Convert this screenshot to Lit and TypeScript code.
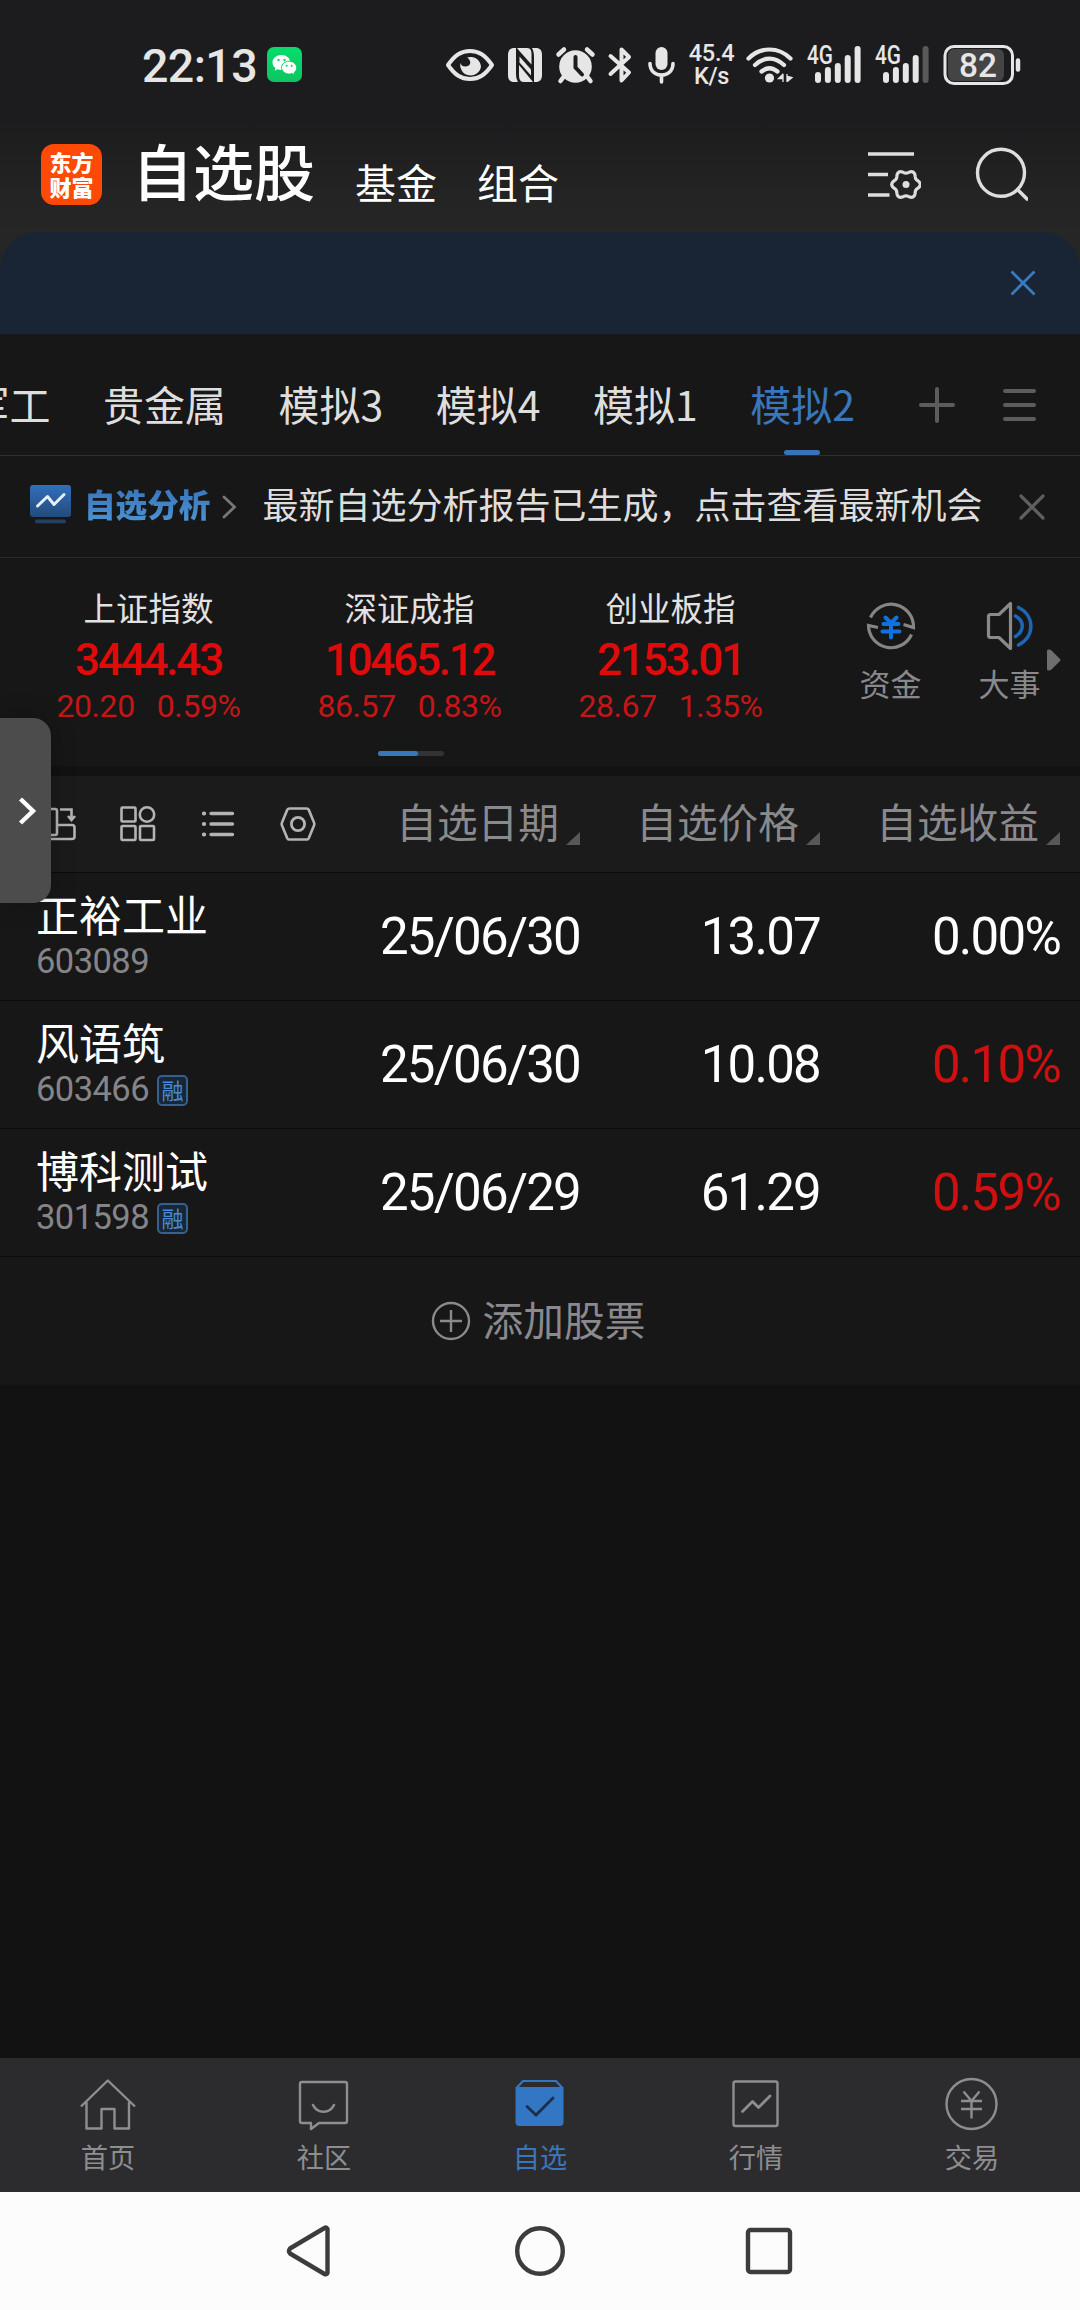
import { LitElement, html, css, svg, nothing } from "lit";
import { customElement, property } from "lit/decorators.js";
import { classMap } from "lit/directives/class-map.js";

const fontStack = css`"Noto Sans CJK SC", "Noto Sans", sans-serif`;
const numberStack = css`Roboto, "Noto Sans CJK SC", sans-serif`;

const pic = (w: number, h: number, body: unknown) =>
  html`<svg width=${w} height=${h} viewBox="0 0 ${w} ${h}" fill="none">${body}</svg>`;

/* ---------- status bar ---------- */

@customElement("status-bar")
class StatusBar extends LitElement {
  static styles = css`
    :host {
      display: grid;
      grid-template-columns: 124px 179px 62px 48px 52px 40px 40px 58px 61px 68px 68px 80px;
      align-items: center;
      height: 129px;
      padding-left: 143px;
      box-sizing: border-box;
      color: #e6e6e6;
      font-family: ${numberStack};
    }
    svg { display: block; overflow: visible; }
    .time { font-size: 46.500px; line-height: 54px; margin: 2px 0 0 -1px; letter-spacing: -0.600px; white-space: nowrap; font-weight: 500; }
    .speed { display: flex; flex-direction: column; font-size: 23.500px; line-height: 22.500px; width: 47px; text-align: center; letter-spacing: -0.300px; font-weight: 500; }
    text { font-family: ${numberStack}; fill: #e6e6e6; }
  `;

  private signal(weak: boolean) {
    const tops = [26, 21, 17, 9, 0];
    return pic(55, 37, svg`
      <text x="0" y="18" font-size="25" font-weight="500" textLength="26" lengthAdjust="spacingAndGlyphs">4G</text>
      ${tops.map((t, i) => svg`<rect x=${8 + i * 9.9} y=${t} width="6" height=${37 - t} rx="3"
        fill=${weak && i === 4 ? "#59595a" : "#e6e6e6"} />`)}`);
  }

  render() {
    const c = "#e6e6e6";
    return html`
      <span class="time">22:13</span>
      ${pic(35, 35, svg`
        <defs><linearGradient id="g" x1="0" y1="0" x2="0" y2="1"><stop offset="0" stop-color="#06dc6b"/><stop offset="1" stop-color="#0cc561"/></linearGradient></defs>
        <rect width="35" height="35" rx="7" fill="url(#g)"/>
        <path d="M14.500 8C9.500 8 5.500 11.200 5.500 15.500c0 2.300 1.200 4.200 3 5.600l-.8 2.700 3-1.500c1.200.4 2.400.6 3.800.6 5 0 8.800-3.400 8.800-7.400S19.500 8 14.500 8z" fill="#fff"/>
        <path d="M22.200 14.200c-4.300 0-7.700 2.900-7.700 6.400s3.400 6.500 7.700 6.500c1 0 2-.2 2.900-.5l2.600 1.400-.7-2.300c1.700-1.200 2.700-3 2.700-5.100 0-3.500-3.300-6.400-7.500-6.400z" fill="#fff" stroke="#09cf66" stroke-width="1"/>
        <g fill="#09cf66"><circle cx="11.500" cy="13" r="1.200"/><circle cx="17.500" cy="13" r="1.200"/><circle cx="19.700" cy="18.800" r="1"/><circle cx="24.700" cy="18.800" r="1"/></g>`)}
      ${pic(48, 34, svg`
        <path d="M2 17C9 7 15 3 24 3s15 4 22 14C39 27 33 31 24 31S9 27 2 17z" stroke=${c} stroke-width="4" stroke-linejoin="round"/>
        <path d="M21 9.500A10.500 10.500 0 0 1 35 18.500a10.500 10.500 0 1 1-20.700-3.500A5.500 5.500 0 0 0 20 18.500C25 18 26 13 21 9.500z" fill=${c}/>`)}
      ${pic(34, 34, svg`
        <path d="M6.500 0 C2 0 0 2.500 0 7v20c0 4.500 2 7 6 7h4C8.500 31 8 29 8 25V0z" fill=${c}/>
        <path d="M9 0h10c4 0 4.500 3 4.500 7v9.500L10.500 2z" fill=${c}/>
        <path d="M11 17v10c0 4 1 7 4.500 7h9.500z" fill=${c}/>
        <path d="M11.500 8.500 23 21.500v6L11.500 14.500z" fill=${c}/>
        <path d="M27.500 34C32 34 34 31.500 34 27V7c0-4.500-2-7-6-7h-4c1.500 3 2 5 2 9v25z" fill=${c}/>`)}
      ${pic(39, 36, svg`
        <circle cx="19.500" cy="19.500" r="16.300" fill=${c}/>
        <path d="M2.500 7.500 8 2.500M36.500 7.500 31 2.500" stroke=${c} stroke-width="4.500" stroke-linecap="round"/>
        <path d="M7.500 30 4.500 34M31.500 30l3 4" stroke=${c} stroke-width="4.500" stroke-linecap="round"/>
        <path d="M19.500 10v10.500L26 27.500" stroke="#1d1d1e" stroke-width="4" stroke-linecap="round"/>`)}
      ${pic(24, 36, svg`
        <path d="M2.500 9 21 25.500 13.500 33.500V2.500L21 10 2.500 27" stroke=${c} stroke-width="4" stroke-linecap="round" stroke-linejoin="round"/>`)}
      ${pic(27, 36, svg`
        <rect x="7.500" y="0" width="12" height="23" rx="6" fill=${c}/>
        <path d="M2 16.500C2 32 25 32 25 16.500M13.500 28v7" stroke=${c} stroke-width="3.600" stroke-linecap="round"/>`)}
      <div class="speed"><span>45.4</span><span>K/s</span></div>
      ${pic(47, 36, svg`
        <path d="M2.500 11.500c12-12 30-12 42 0" stroke=${c} stroke-width="4.200" stroke-linecap="round"/>
        <path d="M9 18c9-8.500 20-8.500 29 0" stroke=${c} stroke-width="4.200" stroke-linecap="round"/>
        <path d="M15.500 24.500c5.500-4.500 10.500-4.500 16 0" stroke=${c} stroke-width="4.200" stroke-linecap="round"/>
        <circle cx="23.500" cy="31" r="4.600" fill=${c}/>
        <path d="M32.500 31.500h4v-4zM37 27v8M41 27v8M41.500 29.500l4.500 1-4 3.500z" stroke=${c} stroke-width="1.300" fill=${c}/>`)}
      ${this.signal(false)}
      ${this.signal(true)}
      ${pic(80, 40, svg`
        <rect x="5" y="4" width="56" height="32" rx="6" fill="#444445"/>
        <rect x="2" y="1.500" width="67.500" height="37" rx="9" stroke=${c} stroke-width="3"/>
        <path d="M75 15.500v9" stroke=${c} stroke-width="4.500" stroke-linecap="round"/>
        <text x="16" y="31.500" font-size="33" font-weight="500" textLength="38" lengthAdjust="spacingAndGlyphs">82</text>`)}
    `;
  }
}

/* ---------- index quote ---------- */

@customElement("index-quote")
class IndexQuote extends LitElement {
  @property() name = "";
  @property() price = "";
  @property() change = "";
  @property() percent = "";

  static styles = css`
    :host {
      display: flex;
      flex-direction: column;
      align-items: center;
      width: 261px;
      font-family: ${numberStack};
      white-space: nowrap;
    }
    .name { font-family: ${fontStack}; font-size: 32.500px; line-height: 40px; color: #e2e2e2; }
    .price { font-size: 44px; line-height: 50px; margin-top: 8px; color: #df0a0a; font-weight: 500; letter-spacing: -2.200px; }
    .delta { display: flex; gap: 22px; font-size: 32px; line-height: 36px; margin-top: 3px; color: #c41616; letter-spacing: -0.400px; }
  `;

  render() {
    return html`
      <div class="name">${this.name}</div>
      <div class="price">${this.price}</div>
      <div class="delta"><span>${this.change}</span><span>${this.percent}</span></div>
    `;
  }
}

/* ---------- watchlist row ---------- */

@customElement("stock-row")
class StockRow extends LitElement {
  @property() name = "";
  @property() code = "";
  @property() date = "";
  @property() price = "";
  @property() gain = "";
  @property({ type: Boolean }) margin = false;
  @property({ type: Boolean }) up = false;

  static styles = css`
    :host {
      display: grid;
      grid-template-columns: 303px 240px 240px 240px;
      align-items: center;
      height: 128px;
      box-sizing: border-box;
      padding-left: 37px;
      border-bottom: 1px solid #0b0b0b;
      font-family: ${numberStack};
      color: #fff;
    }
    .id { align-self: start; padding-top: 15px; }
    .name { font-family: ${fontStack}; font-size: 43px; line-height: 50px; margin-left: -1px; }
    .meta { display: flex; align-items: center; gap: 8px; height: 40px; margin-top: 4px; }
    .code { font-size: 34.500px; line-height: 40px; color: #858589; letter-spacing: -0.550px; margin: -2px 0 0 -1px; }
    .tag {
      width: 31px;
      height: 31px;
      box-sizing: border-box;
      border: 2px solid #35608f;
      border-radius: 5px;
      background: #182636;
      color: #4a8ad0;
      font-family: ${fontStack};
      font-size: 22px;
      line-height: 25px;
      text-align: center;
    }
    .num { font-size: 51px; line-height: 60px; text-align: right; letter-spacing: -1.750px; }
    .up { color: #d01010; }
  `;

  render() {
    return html`
      <div class="id">
        <div class="name">${this.name}</div>
        <div class="meta">
          <span class="code">${this.code}</span>
          ${this.margin ? html`<span class="tag">融</span>` : nothing}
        </div>
      </div>
      <div class="num">${this.date}</div>
      <div class="num">${this.price}</div>
      <div class=${classMap({ num: true, up: this.up })}>${this.gain}</div>
    `;
  }
}

/* ---------- page ---------- */

const groups = ["军工", "贵金属", "模拟3", "模拟4", "模拟1", "模拟2"];

const indices = [
  { name: "上证指数", price: "3444.43", change: "20.20", percent: "0.59%" },
  { name: "深证成指", price: "10465.12", change: "86.57", percent: "0.83%" },
  { name: "创业板指", price: "2153.01", change: "28.67", percent: "1.35%" },
];

const stocks = [
  { name: "正裕工业", code: "603089", margin: false, date: "25/06/30", price: "13.07", gain: "0.00%", up: false },
  { name: "风语筑", code: "603466", margin: true, date: "25/06/30", price: "10.08", gain: "0.10%", up: true },
  { name: "博科测试", code: "301598", margin: true, date: "25/06/29", price: "61.29", gain: "0.59%", up: true },
];

const gearPath = (cx: number, cy: number, r: number, d: number) => {
  let p = "";
  for (let i = 0; i <= 72; i++) {
    const a = (i / 72) * Math.PI * 2;
    const k = r + d * Math.cos(6 * a);
    p += `${i ? "L" : "M"}${(cx + k * Math.cos(a)).toFixed(2)} ${(cy + k * Math.sin(a)).toFixed(2)}`;
  }
  return p + "z";
};

@customElement("app-root")
class AppRoot extends LitElement {
  static styles = css`
    :host {
      display: block;
      width: 1080px;
      height: 2310px;
      overflow: hidden;
      position: relative;
      background: #121212;
      font-family: ${fontStack};
      color: #e2e2e2;
      white-space: nowrap;
    }
    svg { display: block; flex: none; }
    .top { background: linear-gradient(#1c1c1e 0, #1c1c1e 120px, #242424 200px, #262626 232px); }
    .header { display: flex; height: 103px; padding-left: 41px; }
    .logo {
      width: 61px; height: 61px; box-sizing: border-box; margin-top: 15px; padding-top: 5px;
      border-radius: 13px; background: #ff4a05; color: #fff;
      font-size: 22px; line-height: 25px; font-weight: 900; text-align: center;
    }
    .title { font-size: 61px; line-height: 70px; margin: 6px 0 0 30px; color: #fff; font-weight: 500; width: 183px; }
    .link { font-size: 41px; line-height: 50px; margin: 27px 0 0 40px; color: #fff; }
    .filter { margin: 21px 0 0 308px; }
    .search { margin: 17px 0 0 53px; }

    .banner-wrap { background: #262626; }
    .banner {
      height: 102px; box-sizing: border-box; padding: 0 43px; display: flex;
      align-items: center; justify-content: flex-end;
      background: #192534; border-radius: 38px 38px 0 0;
    }
    .panel { background: #171717; }

    .groups { display: flex; height: 122px; box-sizing: border-box; border-bottom: 1px solid #2e2e2e; }
    .strip { display: flex; justify-content: flex-end; gap: 52.500px; width: 855px; overflow: hidden; flex: none; }
    .group { position: relative; flex: none; font-size: 41px; line-height: 50px; padding-top: 44px; color: #dedede; height: 77px; }
    .group.on { color: #3a76bb; }
    .group.on::after {
      content: ""; position: absolute; left: 34px; bottom: 0; width: 36px; height: 5px;
      border-radius: 3px; background: #3873b8;
    }
    .plus { margin: 53px 0 0 64px; }
    .menu { margin: 54px 0 0 48px; }

    .notice { display: flex; align-items: center; height: 102px; box-sizing: border-box; padding-left: 30px; border-bottom: 1px solid #2a2a2a; }
    .notice > svg:first-child { margin-top: -3px; }
    .analysis {
      font-size: 31.600px; line-height: 46px; margin: -7px 0 0 13px; font-weight: 900;
      background: linear-gradient(#3877bf 20%, #4c92d0 90%); -webkit-background-clip: text; background-clip: text; color: transparent;
    }
    .chev { margin: 1px 0 0 12px; }
    .message { font-size: 36px; line-height: 44px; margin: -7px 0 0 25px; width: 757px; color: #dedede; }

    .indices { display: flex; height: 208px; position: relative; padding-left: 18px; box-sizing: border-box; }
    .quotes { display: flex; padding-top: 29px; }
    .tools { display: flex; padding-top: 42px; margin-left: 30px; }
    .tool { display: flex; flex-direction: column; align-items: center; width: 119px; font-size: 31px; line-height: 40px; color: #89898d; gap: 11px; }
    .more { position: absolute; left: 1047px; top: 91px; }
    .pager { position: absolute; left: 378px; top: 193px; width: 66px; height: 5px; border-radius: 3px; background: #333; }
    .pager::after { content: ""; display: block; width: 40px; height: 5px; border-radius: 3px; background: #3a76bb; }

    .gap { height: 10px; background: #121212; }
    .head {
      display: grid; grid-template-columns: 79px 82px 78px 60px 240px 240px 240px;
      height: 97px; box-sizing: border-box; padding-left: 41px; align-items: center;
      background: #1b1b1b; border-bottom: 1px solid #0b0b0b;
    }
    .col { display: flex; justify-content: flex-end; font-size: 40.700px; line-height: 50px; color: #8a8a8e; margin-top: -6px; }
    .col svg { margin: 36px 0 0 7px; }

    .add { display: flex; align-items: center; justify-content: center; height: 128px; gap: 12px; padding-right: 4px; box-sizing: border-box; font-size: 40.700px; line-height: 50px; color: #8a8a8e; }
    .add span { margin-top: -4px; }
    .blank { height: 673px; }

    .tabs { display: grid; grid-template-columns: repeat(5, 1fr); height: 134px; background: #2c2c2e; box-sizing: border-box; padding-top: 18px; }
    .tab { display: flex; flex-direction: column; align-items: center; gap: 4px; font-size: 27.200px; line-height: 40px; color: #8e8e90; }
    .tab.on { color: #3a76bb; }

    .nav { display: flex; justify-content: center; align-items: center; height: 118px; background: #fcfcfc; gap: 177px; }

    .handle {
      position: absolute; left: 0; top: 718px; width: 51px; height: 185px; box-sizing: border-box;
      padding-left: 17px; display: flex; align-items: center; background: #4c4c4c;
      border-radius: 0 18px 18px 0; box-shadow: 0 0 24px rgba(0, 0, 0, 0.25);
    }
  `;

  private tab(label: string, body: unknown, on = false) {
    return html`<div class=${classMap({ tab: true, on })}>${pic(60, 56, body)}<span>${label}</span></div>`;
  }

  private column(label: string) {
    return html`<div class="col">${label}${pic(14, 13, svg`<path d="M14 0v13H0z" fill="#58585a"/>`)}</div>`;
  }

  render() {
    const g = "#b4b4b4";
    const t = "#8e8e90";
    return html`
      <div class="top">
        <status-bar></status-bar>
        <div class="header">
          <div class="logo">东方<br />财富</div>
          <div class="title">自选股</div>
          <div class="link">基金</div>
          <div class="link">组合</div>
          <div class="filter">${pic(54, 50, svg`
            <path d="M1 4h46M1 24.500h20M1 45h21.500" stroke="#dedede" stroke-width="3.600"/>
            <path d=${gearPath(39, 34.5, 12.8, 1.5)} stroke="#dedede" stroke-width="3.200" stroke-linejoin="round"/>
            <circle cx="39" cy="34.500" r="3.500" fill="#dedede"/>`)}</div>
          <div class="search">${pic(54, 56, svg`
            <circle cx="27" cy="26.800" r="23.500" stroke="#dedede" stroke-width="3.400"/>
            <path d="M43.500 43.500 53 53" stroke="#dedede" stroke-width="3.600" stroke-linecap="round"/>`)}</div>
        </div>
      </div>

      <div class="banner-wrap"><div class="banner">
        ${pic(28, 28, svg`<path d="M2.500 2.500l23 23M25.500 2.500l-23 23" stroke="#3a7ac0" stroke-width="2.800"/>`)}
      </div></div>

      <div class="panel">
        <div class="groups">
          <div class="strip">
            ${groups.map((n) => html`<div class=${classMap({ group: true, on: n === "模拟2" })}>${n}</div>`)}
          </div>
          <div class="plus">${pic(36, 36, svg`<path d="M18 2v32M2 18h32" stroke="#5c5c5c" stroke-width="4" stroke-linecap="round"/>`)}</div>
          <div class="menu">${pic(33, 34, svg`<path d="M2 3h29M2 17h29M2 31h29" stroke="#5c5c5c" stroke-width="4" stroke-linecap="round"/>`)}</div>
        </div>

        <div class="notice">
          ${pic(41, 40, svg`
            <defs><linearGradient id="a" x1="0" y1="0" x2="0" y2="1"><stop offset="0" stop-color="#3070bd"/><stop offset="1" stop-color="#234a7a"/></linearGradient></defs>
            <rect width="41" height="32" rx="3" fill="url(#a)"/>
            <rect x="5" y="34.500" width="31" height="3.800" rx="1.900" fill="#23415f"/>
            <path d="M7.500 21 17.500 11.500 24 19.500 34 9.500" stroke="#e8eef6" stroke-width="3" stroke-linecap="round" stroke-linejoin="round"/>`)}
          <div class="analysis">自选分析</div>
          <div class="chev">${pic(15, 24, svg`<path d="M2 2l10.500 10L2 22" stroke="#777" stroke-width="2.800" stroke-linecap="round"/>`)}</div>
          <div class="message">最新自选分析报告已生成，点击查看最新机会</div>
          ${pic(26, 26, svg`<path d="M2 2l22 22M24 2L2 24" stroke="#5f5f5f" stroke-width="3.200" stroke-linecap="round"/>`)}
        </div>

        <div class="indices">
          <div class="quotes">
            ${indices.map((q) => html`<index-quote name=${q.name} price=${q.price} change=${q.change} percent=${q.percent}></index-quote>`)}
          </div>
          <div class="tools">
            <div class="tool">
              ${pic(52, 52, svg`
                <path d="M5.500 17.500A22.500 22.500 0 0 1 48.500 27.500L38.500 24.500" stroke="#858585" stroke-width="3.200"/>
                <path d="M46.500 34.500A22.500 22.500 0 0 1 3.500 25.500L13 27.500" stroke="#858585" stroke-width="3.200"/>
                <path d="M20.500 17.500 26 23l5.500-5.500M26 23v14.500M18.500 24h15M17.500 31.500h17" stroke="#1272dc" stroke-width="4" stroke-linecap="round" stroke-linejoin="round"/>`)}
              <span>资金</span>
            </div>
            <div class="tool">
              ${pic(52, 52, svg`
                <path d="M6.500 14.500h8.500L26.500 3.500v45L15 37.500H6.500a2 2 0 0 1-2-2v-19a2 2 0 0 1 2-2z" stroke="#8a8a8a" stroke-width="3.200" stroke-linejoin="round"/>
                <path d="M31.500 16c9 5 9 15 0 20.500M34.500 7.500c16.500 8 16.500 29.500 0 37.500" stroke="#1c66b4" stroke-width="3.600" stroke-linecap="round"/>`)}
              <span>大事</span>
            </div>
          </div>
          <div class="more">${pic(14, 22, svg`<path d="M0 2Q0 0 2 .500L4 1 13 10q1 1 0 2L4 21l-2 .500Q0 22 0 20z" fill="#6e6e6e"/>`)}</div>
          <div class="pager"></div>
        </div>
        <div class="gap"></div>

        <div class="head">
          ${pic(35, 36, svg`
            <rect x="2" y="3" width="14" height="26" rx="2" stroke=${g} stroke-width="2.600"/>
            <path d="M19 3.500h11.500v9M27 10l3.500 4 3.500-4M10 33h21a2.500 2.500 0 0 0 2.500-2.500v-9a2.500 2.500 0 0 0-2.500-2.500H16" stroke=${g} stroke-width="2.600"/>`)}
          ${pic(36, 36, svg`<g stroke=${g} stroke-width="2.600">
            <rect x="1.500" y="1.500" width="14" height="14" rx="1"/><circle cx="27" cy="8.500" r="7.200"/>
            <rect x="1.500" y="20" width="14" height="14" rx="1"/><rect x="20" y="20" width="14" height="14" rx="1"/></g>`)}
          ${pic(34, 30, svg`
            <path d="M9 4.500h21.500M9 15h21.500M9 25.500h21.500" stroke=${g} stroke-width="3.400" stroke-linecap="round"/>
            <path d="M2 4.500h.100M2 15h.100M2 25.500h.100" stroke=${g} stroke-width="4.200" stroke-linecap="round"/>`)}
          ${pic(36, 36, svg`
            <path d="M9.500 2.500h17q1.500 0 2.200 1.200L34 16.500q.700 1.500 0 3L28.700 32.300q-.700 1.200-2.200 1.200h-17q-1.500 0-2.200-1.200L2 19.500q-.700-1.500 0-3L7.300 3.700q.700-1.200 2.200-1.200z" stroke=${g} stroke-width="2.600"/>
            <circle cx="18" cy="18" r="6.600" stroke=${g} stroke-width="2.800"/>`)}
          ${this.column("自选日期")}${this.column("自选价格")}${this.column("自选收益")}
        </div>

        ${stocks.map((s) => html`<stock-row name=${s.name} code=${s.code} date=${s.date} price=${s.price} gain=${s.gain}
          ?margin=${s.margin} ?up=${s.up}></stock-row>`)}

        <div class="add">
          ${pic(40, 40, svg`<circle cx="20" cy="20" r="18" stroke="#8a8a8e" stroke-width="2.400"/><path d="M20 9v22M9 20h22" stroke="#8a8a8e" stroke-width="2.400"/>`)}
          <span>添加股票</span>
        </div>
      </div>
      <div class="blank"></div>

      <div class="tabs">
        ${this.tab("首页", svg`<path d="M3 30.500 29.800 4.500 57 30.500M8.500 26v26.500H23.500V33h13v19.500H51V26" stroke=${t} stroke-width="2.400" stroke-linejoin="round"/>`)}
        ${this.tab("社区", svg`
          <path d="M8 6h43a2 2 0 0 1 2 2v37a2 2 0 0 1-2 2H25L17 53V47H8a2 2 0 0 1-2-2v-37a2 2 0 0 1 2-2z" stroke=${t} stroke-width="2.400" stroke-linejoin="round"/>
          <path d="M19 29c4.500 9 16.500 9 21 0" stroke=${t} stroke-width="2.600" stroke-linecap="round"/>`)}
        ${this.tab("自选", svg`
          <path d="M6.500 12 13 5h33L52.500 12" stroke="#3276c4" stroke-width="2.200"/>
          <path d="M5.500 11h48v35a4 4 0 0 1-4 4h-40a4 4 0 0 1-4-4z" fill="#3276c4"/>
          <path d="M17 30.500l9 8.500 17-17" stroke="#1c2f4a" stroke-width="2.800" stroke-linecap="round"/>`, true)}
        ${this.tab("行情", svg`
          <rect x="7.500" y="5.500" width="44" height="44.500" rx="2" stroke=${t} stroke-width="2.400"/>
          <path d="M16.500 35.500 26.500 25.500 32.500 31.500 44 20" stroke=${t} stroke-width="2.800" stroke-linecap="round" stroke-linejoin="round"/>`)}
        ${this.tab("交易", svg`
          <circle cx="29.500" cy="28" r="25" stroke=${t} stroke-width="2.400"/>
          <path d="M21.500 15.500l8 9.500 8-9.500M29.500 25v17.500M19 25h21M19 33h21" stroke=${t} stroke-width="2.400"/>`)}
      </div>

      <div class="nav">
        ${pic(52, 54, svg`<path d="M42.500 5v44q-1 2-3 1L5 29.500q-2-2.500 0-5L39.500 4q2-1 3 1z" stroke="#3c3c3c" stroke-width="4.400" stroke-linejoin="round"/>`)}
        ${pic(52, 54, svg`<circle cx="26" cy="27" r="22.800" stroke="#3c3c3c" stroke-width="4.400"/>`)}
        ${pic(52, 54, svg`<rect x="5" y="6" width="42" height="42" rx="2.500" stroke="#3c3c3c" stroke-width="4.400"/>`)}
      </div>

      <div class="handle">${pic(20, 30, svg`<path d="M3.500 3l12.500 12L3.500 27" stroke="#fff" stroke-width="4.400"/>`)}</div>
    `;
  }
}
